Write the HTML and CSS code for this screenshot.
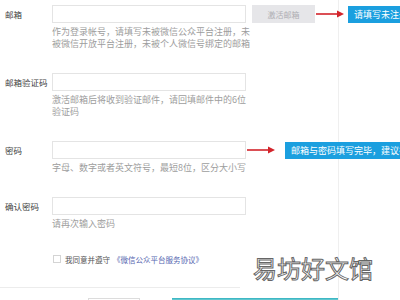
FILE: index.html
```html
<!DOCTYPE html>
<html lang="zh-CN">

<head>
    <meta charset="UTF-8">
    <meta name="viewport" content="width=device-width, initial-scale=1.0">
    <title>注册</title>
    <link rel="stylesheet" href="styles.css">
</head>

<body>
    <div class="page">
        <form class="reg-form">
            <div class="field">
                <label class="field-label">邮箱</label>
                <div class="field-body">
                    <div class="field-line">
                        <input class="text-input" type="text">
                        <button class="btn-activate" type="button">激活邮箱</button>
                        <svg class="arrow" width="28" height="8" viewBox="0 0 28 8">
                            <path d="M0 4H22" stroke="#d3242b" stroke-width="1.6" />
                            <path d="M21 0.5L28 4L21 7.5Z" fill="#d3242b" />
                        </svg>
                        <span class="tip">请填写未注册过的邮箱</span>
                    </div>
                    <p class="hint">作为登录帐号，请填写未被微信公众平台注册，未被微信开放平台注册，未被个人微信号绑定的邮箱</p>
                </div>
            </div>

            <div class="field">
                <label class="field-label">邮箱验证码</label>
                <div class="field-body">
                    <div class="field-line">
                        <input class="text-input" type="text">
                    </div>
                    <p class="hint">激活邮箱后将收到验证邮件，请回填邮件中的6位验证码</p>
                </div>
            </div>

            <div class="field">
                <label class="field-label">密码</label>
                <div class="field-body">
                    <div class="field-line">
                        <input class="text-input" type="password">
                        <svg class="arrow" width="28" height="8" viewBox="0 0 28 8">
                            <path d="M0 4H22" stroke="#d3242b" stroke-width="1.6" />
                            <path d="M21 0.5L28 4L21 7.5Z" fill="#d3242b" />
                        </svg>
                        <span class="tip tip-wide">邮箱与密码填写完毕，建议截图保存</span>
                    </div>
                    <p class="hint">字母、数字或者英文符号，最短8位，区分大小写</p>
                </div>
            </div>

            <div class="field">
                <label class="field-label">确认密码</label>
                <div class="field-body">
                    <div class="field-line">
                        <input class="text-input" type="password">
                    </div>
                    <p class="hint">请再次输入密码</p>
                </div>
            </div>

            <div class="agree">
                <span class="checkbox"></span>
                <span>我同意并遵守</span>
                <a class="agree-link" href="#">《微信公众平台服务协议》</a>
            </div>

            <div class="divider"></div>

            <div class="actions">
                <button class="btn-plain" type="button" aria-label="上一步"></button>
                <button class="btn-primary" type="button" aria-label="注册"></button>
            </div>
        </form>
    </div>

    <div class="watermark">易坊好文馆</div>
</body>

</html>
```

FILE: styles.css
```css
html,
body {
    overflow: hidden;
}

body {
    margin: 0;
    background: #fff;
    font-family: "Noto Sans CJK SC", "Noto Sans", sans-serif;
    color: #444;
    height: 300px;
}

.page {
    width: 338px;
    height: 300px;
    border-right: 1px solid #efefef;
}

.reg-form {
    padding-top: 5px;
}

.field {
    display: grid;
    grid-template-columns: 52px 1fr;
    margin-bottom: 23px;
}

.field-label {
    padding-left: 5px;
    font-size: 8.5px;
    line-height: 18px;
    color: #3f3f3f;
    white-space: nowrap;
}

.field-line {
    display: flex;
    align-items: center;
    height: 18px;
}

.text-input {
    box-sizing: border-box;
    width: 194px;
    height: 18px;
    margin: 0;
    padding: 0 4px;
    border: 1px solid #e4e4e4;
    background: #fff;
    flex-shrink: 0;
}

.btn-activate {
    width: 63px;
    height: 18px;
    margin: 0 0 0 6px;
    padding: 0;
    border: none;
    background: #e6e6e9;
    color: #aeaeb3;
    font-family: inherit;
    font-size: 8px;
    flex-shrink: 0;
}

.arrow {
    flex-shrink: 0;
    margin-left: 1px;
}

.tip {
    flex-shrink: 0;
    margin-left: 4px;
    padding: 0 6px;
    height: 17px;
    line-height: 17px;
    background: #1b9fdf;
    color: #fff;
    font-size: 9px;
    white-space: nowrap;
}

.tip-wide {
    margin-left: 10px;
}

.hint {
    width: 199px;
    margin: 3px 0 0;
    font-size: 9px;
    line-height: 12px;
    color: #9d9d9d;
}

.agree {
    display: flex;
    align-items: center;
    height: 12px;
    margin: 0 0 22px 53px;
    font-size: 7.5px;
    color: #555;
    white-space: nowrap;
}

.checkbox {
    box-sizing: border-box;
    width: 8px;
    height: 8px;
    margin-right: 4px;
    border: 1px solid #d4d4d4;
}

.agree-link {
    margin-left: 3px;
    color: #5666b0;
    text-decoration: none;
}

.divider {
    width: 240px;
    border-top: 1px solid #ececec;
}

.actions {
    display: flex;
    margin: 10px 0 0 88px;
}

.btn-plain {
    width: 60px;
    height: 20px;
    margin: 0;
    border: 1px solid #dcdcdc;
    background: #fff;
}

.btn-primary {
    width: 197px;
    height: 20px;
    margin: 0 0 0 32px;
    border: none;
    border-top: 1px solid #3fb8c4;
    background: #5fc6cf;
}

.watermark {
    position: absolute;
    left: 253px;
    top: 253px;
    font-family: "Noto Sans CJK SC", sans-serif;
    font-size: 24px;
    line-height: 30px;
    color: #fff;
    -webkit-text-stroke: 1px #666;
}
```
